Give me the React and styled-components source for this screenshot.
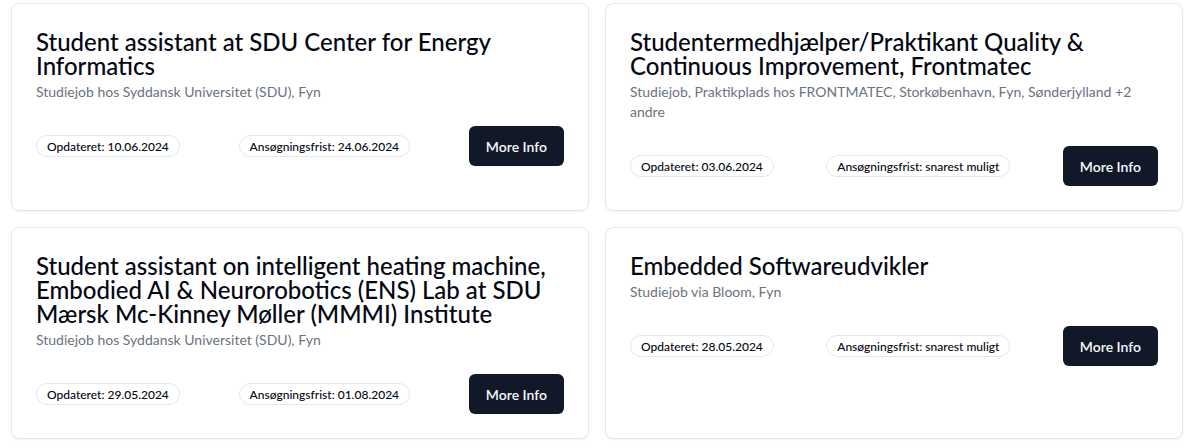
import React from "react";
import styled, { createGlobalStyle } from "styled-components";

const GlobalStyle = createGlobalStyle`
  body {
    margin: 0;
    background: #FFFFFF;
    font-family: Lato, 'Noto Sans', sans-serif;
    color: #030712;
  }
`;

const Grid = styled.div`
  display: grid;
  grid-template-columns: 1fr 1fr;
  gap: 16px;
  padding: 3px 11px;
`;

const Card = styled.div`
  border: 1px solid #E5E7EB;
  border-radius: 8px;
  padding: 24px;
  background: #FFFFFF;
  box-shadow: 0 1px 2px rgba(0, 0, 0, 0.05);
`;

const Title = styled.h2`
  margin: 0;
  padding-top: 2px;
  font-size: 24px;
  line-height: 24px;
  font-weight: 500;
  color: #030712;
`;

const Meta = styled.p`
  margin: 4px 0 0;
  font-size: 14px;
  line-height: 20px;
  color: #6B7280;
`;

const Footer = styled.div`
  display: flex;
  justify-content: space-between;
  align-items: center;
  margin-top: 24px;
`;

const Badge = styled.span`
  display: inline-flex;
  align-items: center;
  height: 22px;
  box-sizing: border-box;
  padding: 0 10px;
  border: 1px solid #E5E7EB;
  border-radius: 9999px;
  font-size: 12px;
  font-weight: 500;
  color: #030712;
`;

const InfoButton = styled.button`
  height: 40px;
  padding: 0 17px;
  border: none;
  border-radius: 6px;
  background: #111827;
  color: #F9FAFB;
  font-family: inherit;
  font-size: 14px;
  font-weight: 600;
  cursor: pointer;
`;

const jobs = [
    {
        title: "Student assistant at SDU Center for Energy Informatics",
        meta: "Studiejob hos Syddansk Universitet (SDU), Fyn",
        updated: "10.06.2024",
        deadline: "24.06.2024",
    },
    {
        title: "Studentermedhjælper/Praktikant Quality & Continuous Improvement, Frontmatec",
        meta: "Studiejob, Praktikplads hos FRONTMATEC, Storkøbenhavn, Fyn, Sønderjylland +2 andre",
        updated: "03.06.2024",
        deadline: "snarest muligt",
    },
    {
        title: "Student assistant on intelligent heating machine, Embodied AI & Neurorobotics (ENS) Lab at SDU Mærsk Mc-Kinney Møller (MMMI) Institute",
        meta: "Studiejob hos Syddansk Universitet (SDU), Fyn",
        updated: "29.05.2024",
        deadline: "01.08.2024",
    },
    {
        title: "Embedded Softwareudvikler",
        meta: "Studiejob via Bloom, Fyn",
        updated: "28.05.2024",
        deadline: "snarest muligt",
    },
];

export default function App() {
    return (
        <>
            <GlobalStyle />
            <Grid>
                {jobs.map((job, index) => (
                    <Card key={index}>
                        <Title>{job.title}</Title>
                        <Meta>{job.meta}</Meta>
                        <Footer>
                            <Badge>Opdateret: {job.updated}</Badge>
                            <Badge>Ansøgningsfrist: {job.deadline}</Badge>
                            <InfoButton>More Info</InfoButton>
                        </Footer>
                    </Card>
                ))}
            </Grid>
        </>
    );
}
